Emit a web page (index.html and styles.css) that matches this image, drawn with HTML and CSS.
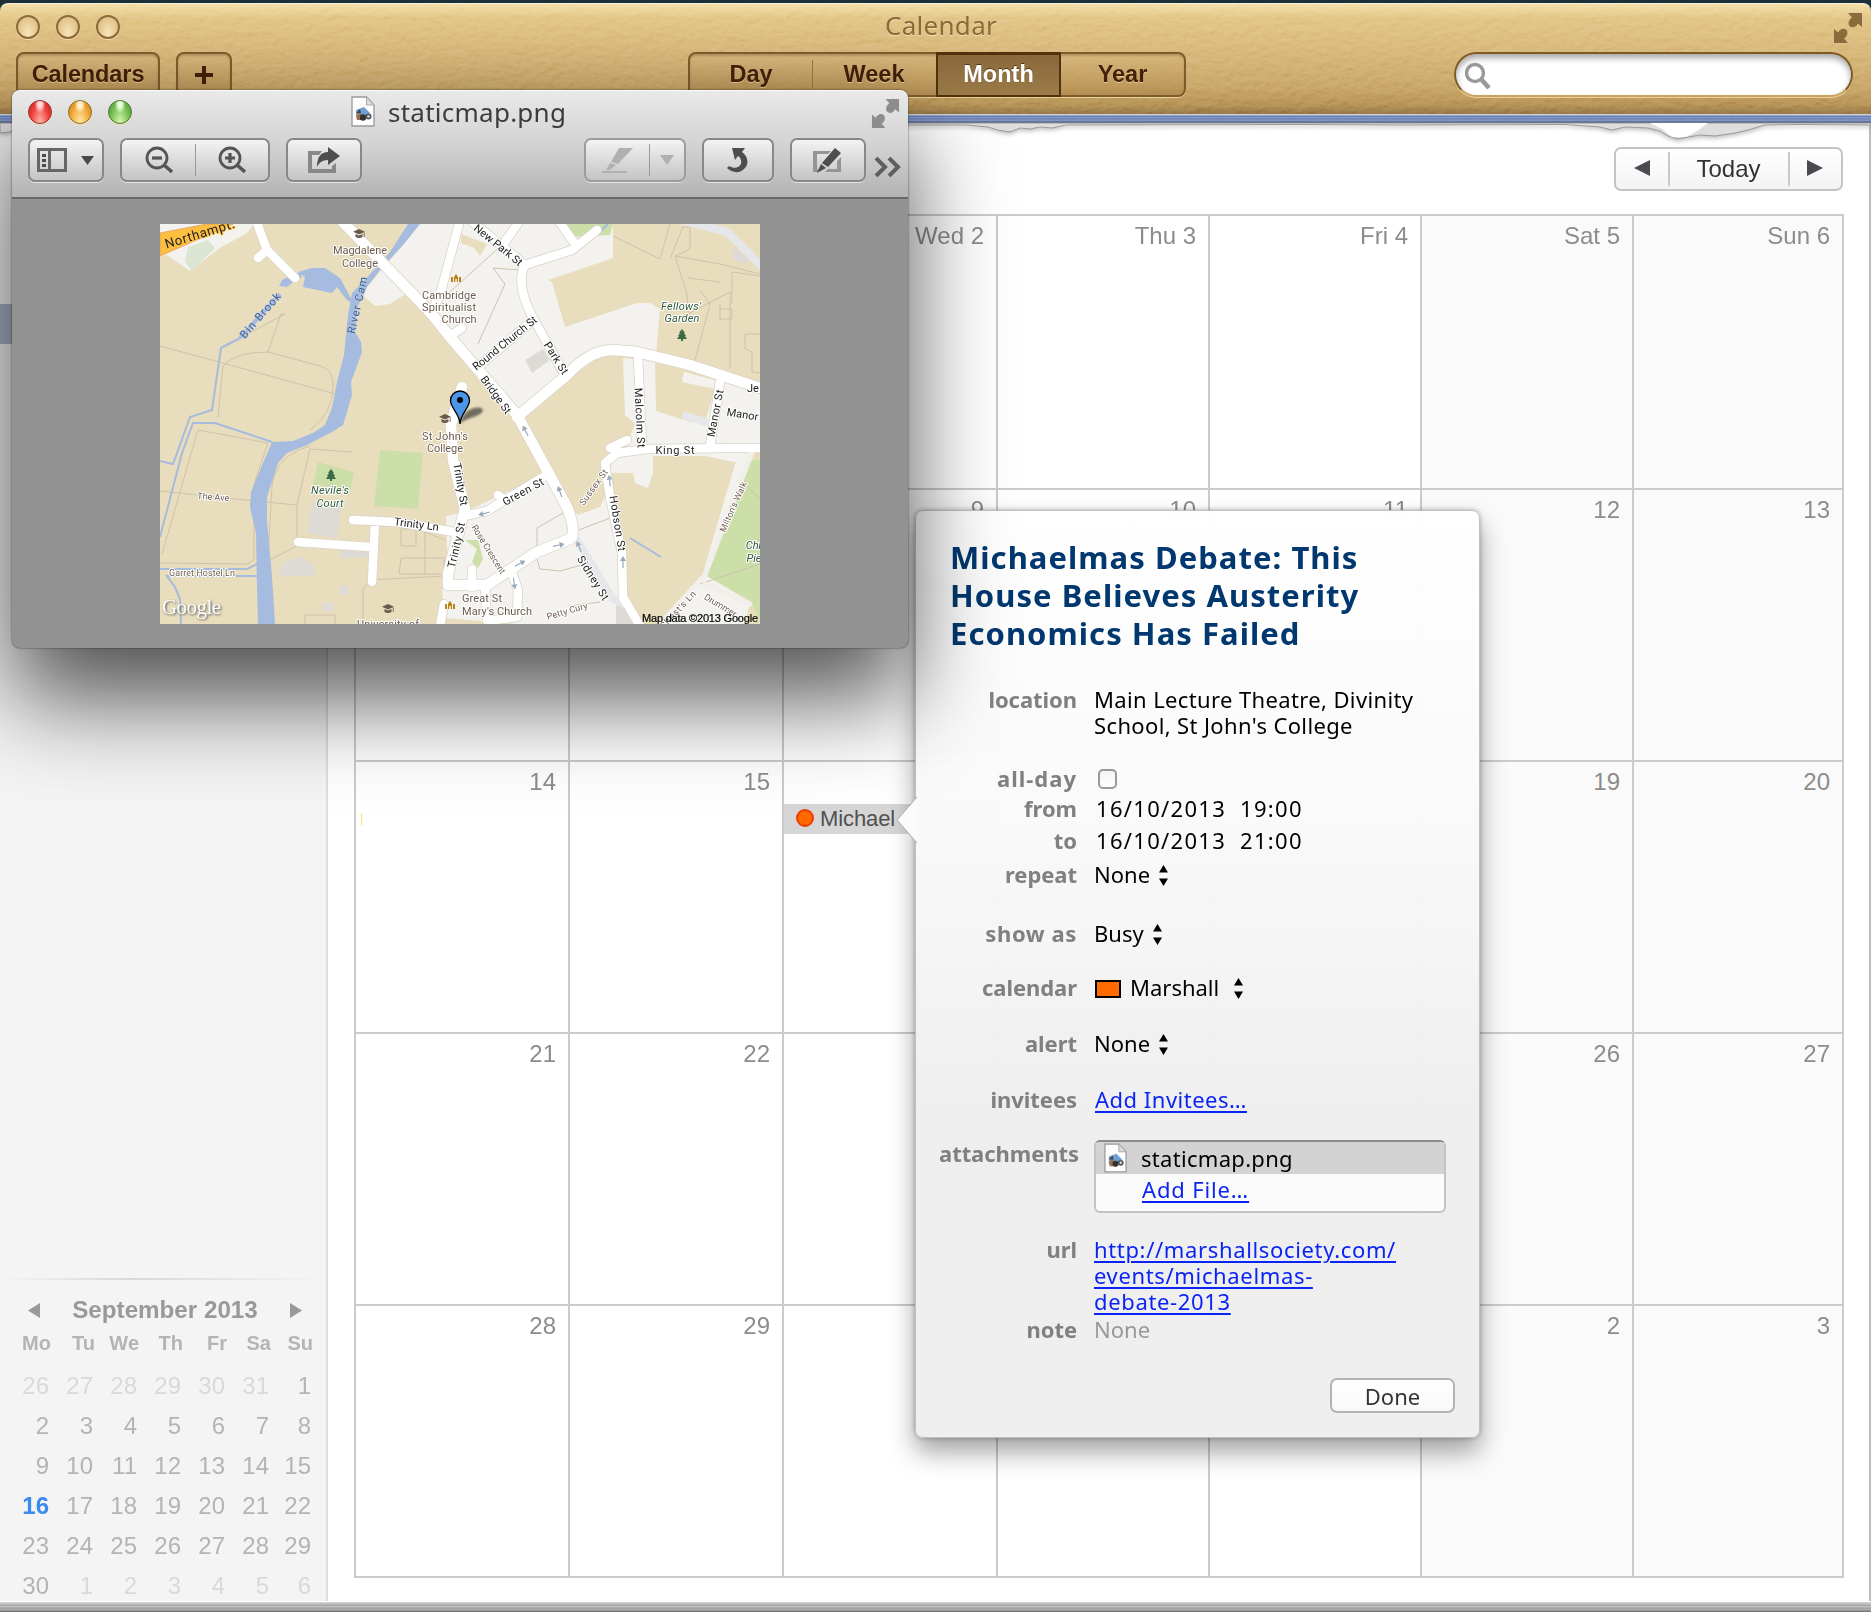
FILE: index.html
```html
<!DOCTYPE html>
<html lang="en">
<head>
<meta charset="utf-8">
<title>Calendar</title>
<link rel="stylesheet" href="styles.css">
</head>
<body>
<svg class="defs" width="0" height="0" aria-hidden="true">
  <defs>
    <symbol id="fullscreen" viewBox="0 0 28 30"><path d="M14 0H28V14L24 10.500C22 14.500 18 15.500 15.500 13C13.500 10.500 15 6.500 18 4.500ZM0 16L4 19.500C6 15.500 10 14.500 12.500 17C14.500 19.500 13 23.500 10 25.500L14 30H0Z"/></symbol>
    <symbol id="doc" viewBox="0 0 24 31"><path d="M1 1H15.500L23 9V30H1Z" fill="#fdfdfd" stroke="#999" stroke-width="1.300"/><path d="M15.500 1V9H23Z" fill="#ddd" stroke="#aaa"/><path d="M5 14L13 11L19 17L12 23L5 21Z" fill="#6f9fd8"/><path d="M5 20L9 16L13 24H6Z" fill="#9b7050"/><path d="M5 17L9 13L10 17Z" fill="#444"/><circle cx="12" cy="21.500" r="3.200" fill="#333"/><circle cx="17.500" cy="20.500" r="3" fill="#555"/><circle cx="17.500" cy="20.500" r="1.300" fill="#cde"/></symbol>
    <symbol id="updown" viewBox="0 0 9 21"><path d="M4.500 0L9 7.500H0ZM4.500 21L0 13.500H9Z"/></symbol>
    <symbol id="cap" viewBox="0 0 12 10"><path d="M6 0L12 2.800L6 5.500L0 2.800ZM2.500 5L6 6.600L9.500 5V8Q6 10 2.500 8ZM10.800 3.500H11.600V8H10.800Z" fill="#6b5b4d"/></symbol>
    <symbol id="tree" viewBox="0 0 10 12"><path d="M5 0L8 4H7L9 7H8L10 10H6V12H4V10H0L2 7H1L3 4H2Z" fill="#3d6b45"/></symbol>
    <symbol id="church" viewBox="0 0 10 8"><path d="M0 3H2V8H0ZM3 8V3L5 0L7 3V8H5.800V5H4.300V8ZM8 3H10V8H8Z" fill="#b98417"/></symbol>
    <symbol id="oneway" viewBox="0 0 6 12"><path d="M3 0L6 5H3.600V12H2.400V5H0Z" fill="#9aabb8"/></symbol>
  </defs>
</svg>

<div class="calendar">
  <header class="leather">
    <svg class="grain" width="1871" height="110" aria-hidden="true">
      <filter id="hide" x="0" y="0" width="100%" height="100%"><feTurbulence type="fractalNoise" baseFrequency="0.11 0.16" numOctaves="3" seed="8"/><feDiffuseLighting surfaceScale="1.700" lighting-color="#ddd"><feDistantLight azimuth="250" elevation="42"/></feDiffuseLighting></filter>
      <rect width="1871" height="110" filter="url(#hide)"/>
    </svg>
    <div class="titlebar">
      <div class="lights faded"><i></i><i></i><i></i></div>
      <h1>Calendar</h1>
      <svg class="full brown" width="28" height="30"><use href="#fullscreen"/></svg>
    </div>
    <div class="tools">
      <button class="lbtn calendars">Calendars</button>
      <button class="lbtn plus"><svg width="20" height="20"><path d="M10 1V19M1 10H19" stroke="#43210a" stroke-width="4"/></svg></button>
      <div class="views"><span>Day</span><span class="split">Week</span><span class="on">Month</span><span>Year</span></div>
      <div class="search"><svg width="26" height="28" fill="none" stroke="#999"><circle cx="10" cy="11" r="8.500" stroke-width="3.400"/><path d="M16 17L24 26" stroke-width="4.600"/></svg></div>
    </div>
  </header>
  <div class="stitch"></div>
  <div class="body">
    <svg class="torn" width="1871" height="20" aria-hidden="true">
      <path d="M0 0H1871V2L1800 1.500L1765 2L1748 7L1735 10L1715 13L1700 12L1688 14L1678 16L1668 13L1660 8L1648 5L1625 4L1612 7L1600 4L1565 1.500L1400 2L1300 1.500L1066 2L1052 5L1040 4L1030 6L1020 5L1010 9L998 7L988 4L966 2L600 2L20 2L10 9L0 10Z"/>
      <path class="white" d="M1650 0L1662 6L1672 14L1686 14L1697 8L1708 0Z"/>
    </svg>
    <aside>
      <div class="selected-calendar"></div>
      <div class="mini">
        <div class="mini-head"><svg width="12" height="15"><path d="M12 0V15L0 7.500Z"/></svg><b>September 2013</b><svg width="12" height="15"><path d="M0 0V15L12 7.500Z"/></svg></div>
        <div class="mini-grid names"><b>Mo</b><b>Tu</b><b>We</b><b>Th</b><b>Fr</b><b>Sa</b><b>Su</b></div>
        <div class="mini-grid days">
          <i>26</i><i>27</i><i>28</i><i>29</i><i>30</i><i>31</i><span>1</span>
          <span>2</span><span>3</span><span>4</span><span>5</span><span>6</span><span>7</span><span>8</span>
          <span>9</span><span>10</span><span>11</span><span>12</span><span>13</span><span>14</span><span>15</span>
          <b>16</b><span>17</span><span>18</span><span>19</span><span>20</span><span>21</span><span>22</span>
          <span>23</span><span>24</span><span>25</span><span>26</span><span>27</span><span>28</span><span>29</span>
          <span>30</span><i>1</i><i>2</i><i>3</i><i>4</i><i>5</i><i>6</i>
        </div>
      </div>
    </aside>
    <main>
      <div class="nav"><span class="arrow"><svg width="16" height="16"><path d="M16 0V16L0 8Z"/></svg></span><span class="today">Today</span><span class="arrow"><svg width="16" height="16"><path d="M0 0V16L16 8Z"/></svg></span></div>
      <div class="month">
        <div></div><div></div><div>Wed 2</div><div>Thu 3</div><div>Fri 4</div><div class="we">Sat 5</div><div class="we">Sun 6</div>
        <div></div><div></div><div>9</div><div>10</div><div>11</div><div class="we">12</div><div class="we">13</div>
        <div>14<span class="tick"></span></div><div>15</div><div><span class="event"><i></i>Michael</span></div><div></div><div></div><div class="we">19</div><div class="we">20</div>
        <div>21</div><div>22</div><div></div><div></div><div></div><div class="we">26</div><div class="we">27</div>
        <div>28</div><div>29</div><div></div><div></div><div></div><div class="we">2</div><div class="we">3</div>
      </div>
    </main>
  </div>
  <div class="pages"></div>
</div>

<section class="popover">
  <svg class="beak" width="21" height="46"><path d="M21 0L1 23L21 46" fill="#fbfbfb" stroke="#aaa"/></svg>
  <h2>Michaelmas Debate: This<br>House Believes Austerity<br>Economics Has Failed</h2>
  <dl>
    <dt>location</dt><dd class="loc">Main Lecture Theatre, Divinity<br>School, St John's College</dd>
    <dt class="allday">all-day</dt><dd><span class="check"></span></dd>
    <dt>from</dt><dd class="date">16/10/2013&nbsp; 19:00</dd>
    <dt>to</dt><dd class="date">16/10/2013&nbsp; 21:00</dd>
    <dt>repeat</dt><dd>None<svg class="ud" width="9" height="21"><use href="#updown"/></svg></dd>
    <dt class="showas">show as</dt><dd>Busy<svg class="ud" width="9" height="21"><use href="#updown"/></svg></dd>
    <dt>calendar</dt><dd><span class="swatch"></span>Marshall<svg class="ud wide" width="9" height="21"><use href="#updown"/></svg></dd>
    <dt>alert</dt><dd>None<svg class="ud" width="9" height="21"><use href="#updown"/></svg></dd>
    <dt>invitees</dt><dd><a class="inv">Add Invitees…</a></dd>
    <dt>attachments</dt><dd><div class="files"><div class="file"><svg width="23" height="30"><use href="#doc"/></svg>staticmap.png</div><a>Add File…</a></div></dd>
    <dt>url</dt><dd><a class="url">http://marshallsociety.com/<br>events/michaelmas-<br>debate-2013</a></dd>
    <dt>note</dt><dd class="none">None</dd>
  </dl>
  <button class="done">Done</button>
</section>

<section class="preview">
  <div class="chrome">
    <div class="ptitle">
      <div class="lights"><i class="r"></i><i class="y"></i><i class="g"></i></div>
      <div class="pname"><svg width="24" height="31"><use href="#doc"/></svg><span>staticmap.png</span></div>
      <svg class="full gray" width="29" height="29"><use href="#fullscreen"/></svg>
    </div>
    <div class="ptools">
      <div class="pb b1"><svg width="58" height="26"><path fill-rule="evenodd" d="M0 1H30V25H0ZM3 4V22H11V4ZM14 4V22H27V4Z" fill="#666"/><path d="M5 7H9V10H5ZM5 12H9V15H5ZM5 17H9V20H5ZM44 9H57L50.500 18Z" fill="#4a4a4a"/></svg></div>
      <div class="pb b2"><span><svg width="28" height="28" fill="none" stroke="#555"><circle cx="12" cy="12" r="10" stroke-width="2.800"/><path d="M7 12H17" stroke-width="3.200"/><path d="M19 19L27 26" stroke-width="3.600"/></svg></span><span><svg width="28" height="28" fill="none" stroke="#555"><circle cx="12" cy="12" r="10" stroke-width="2.800"/><path d="M7 12H17M12 7V17" stroke-width="3.200"/><path d="M19 19L27 26" stroke-width="3.600"/></svg></span></div>
      <div class="pb b3"><svg width="32" height="28"><path d="M14 5H0V27H28V17L24 20V23H4V9H11Z" fill="#888"/><path d="M20 1L32 10L20 19V14C14 14 11 17 9 21C9 11 13 6 20 6Z" fill="#4e4e4e"/></svg></div>
      <div class="pb b4"><span><svg width="34" height="28"><path d="M18 2H32L17 18L10 16ZM9 17L15 19L9 24L5 24ZM2 25H26V27H0Z"/></svg></span><span><svg width="14" height="10"><path d="M0 0H14L7 10Z"/></svg></span></div>
      <div class="pb b5"><svg width="24" height="28"><path d="M6 2H19L16 6C22 10 23 18 19 22C14 28 6 27 1 22L3 20C8 23 13 22 15 18C16 14 14 11 12 10L9 14Z" fill="#4e4e4e"/></svg></div>
      <div class="pb b6"><svg width="30" height="28"><path d="M0 5H18L15 8H4V23H7L5 26H0ZM28 11V26H12L15 23H24V15Z" fill="#959595"/><path d="M22 2L28 7L15 21L9 17ZM8 18L13 22L4 27Z" fill="#4e4e4e"/></svg></div>
      <svg class="more" width="28" height="20" fill="none" stroke="#5e5e5e" stroke-width="4"><path d="M2 1L11 10L2 19M15 1L24 10L15 19"/></svg>
    </div>
  </div>
  <div class="stage">
    <svg class="map" width="600" height="400" viewBox="0 0 600 400">
      <rect width="600" height="400" fill="#e8ddbd"/>
      <g fill="#f3f2ee">
        <path d="M0 0H94L87 9L60 24L30 47L7 31L0 32Z"/>
        <path d="M260 0H453V34L388 56L392 58L405 103L477 79L490 79L500 85L496 130L455 128L430 132L357 192L290 112L270 90L247 69L230 80L215 82L204 72L207 63L243 21Z"/>
        <path d="M463 134L495 137L496 187L530 198L545 198L555 165L522 158L524 148L600 168V228L585 226L583 240L545 232H493V249L488 264L475 259L473 249H452L440 240L465 225L475 200L465 191Z"/>
        <path d="M282 366L288 355L286 292L305 288L383 251L413 286L418 291L440 283L445 272L452 268L462 330L467 375L480 400H357L320 397L285 394Z"/>
        <path d="M592 228L580 256L545 351L590 378L585 400H505L541 356L575 240L583 230Z"/>
      </g>
      <path d="M28 23L48 16L55 24L32 47L25 38Z" fill="#dbe5d3"/>
      <path d="M301 10L327 20L320 32L314 24L301 19Z" fill="#e8ddbd"/>
      <g fill="#cddfa8">
        <path d="M158 238L194 248L190 268L153 260ZM220 226L263 229L258 285L214 282ZM407 0H453L450 11L412 13ZM592 236H600V396L590 376L545 351L560 311L580 256ZM305 316L318 316L323 335L318 344L312 338L317 325Z"/>
      </g>
      <g fill="#dedad5">
        <path d="M152 278L182 279L177 314L147 309ZM117 353L123 339L140 333L153 341L155 351ZM365 136L383 125L390 136L372 149ZM180 326L208 328V334H180ZM180 362H189V371H180ZM162 379H173V387H162ZM573 22L590 36L585 40L572 35ZM456 380L470 384L478 400H456Z"/>
      </g>
      <g fill="none" stroke="#cfc2ae" stroke-width="1">
        <path d="M0 122L70 141L190 174M80 114L125 90L121 90L108 128M63 142Q75 128 108 128L160 142Q175 146 173 165Q172 190 150 206M63 142L58 194M38 206L108 219L94 260L94 335L88 340L0 339M38 206L2 330M0 267L95 277L137 281M137 315L137 281L150 225L192 228M107 353L112 262Q115 232 150 222M97 342L137 322M203 400V365L210 356L284 352M241 305H256V322H241ZM241 334H284V350H239ZM265 308V350M285 316L265 308M145 400V391H175V400M318 120L345 60L333 44L360 46M290 68L345 18M453 12L500 35L510 0M510 35L523 3H530V25L515 32L527 70L528 90L570 68V145M515 32L560 40L600 50M528 54L560 58M540 66L550 80L534 140M572 80V48L600 52M560 85H572V95H560V80M585 110H600M585 110V125L592 128V148L600 149M377 304L410 285M377 304V322M419 306L450 294M377 335L380 345L400 347L425 340M540 360L600 340M580 256L600 275M440 378L410 382"/>
      </g>
      <g fill="#a5bbdf">
        <path d="M248 0L230 28L203 58L192 69L188 91L184 131L177 158L172 184L165 201L153 209L133 217L112 218L103 239L91 268L90 283L96 309L97 363L98 400H115L112 353L107 296V273L118 239L127 229L147 221L172 208L183 201L192 171L191 158L202 128L201 118L195 108L197 84L207 63L220 46L243 21L260 0Z"/>
        <path d="M138 48L152 44L165 44L180 54L188 69L194 80L187 76L177 63L172 69L143 63L145 53ZM119 62L122 56L140 48L142 53L133 58L127 63Z"/>
      </g>
      <g fill="none" stroke="#a5bbdf" stroke-width="2">
        <path d="M80 114L61 124L52 186L30 193L13 240L0 237M112 218L55 199H33L22 229L0 313M0 345H87L97 340M7 352H97M6 351L15 363L20 375L21 400M440 8L448 0M470 314L501 333"/>
        <path d="M120 70L80 114" stroke-width="4"/>
      </g>
      <g fill="none" stroke-linecap="round" stroke-linejoin="round">
        <g stroke="#d9d3c6">
          <path d="M180 -5L270 88L290 113L357 191L387 246L407 283Q417 308 410 315L377 328L327 361H288V350L298 310L305 285L293 236L291 200L302 163M600 164L530 141L477 128L453 126Q430 126 407 151L357 193" stroke-width="12"/>
          <path d="M96 -4L107 26L135 54M107 26L98 34M300 -4L280 71L270 90M310 -4L365 41L412 26L437 6M365 41Q355 60 373 94L405 151M360 -4L345 18M398 -4L415 20M373 96L317 144M478 132L482 222M560 158L550 222M600 224H567L487 225L457 229L445 239L450 273L462 329L463 373L480 402M450 224L467 216M304 292L327 287L345 276L385 252M345 276L338 271M193 296L237 298L300 309M215 299L212 358M138 318L210 323M290 112L302 104M352 349L358 366L357 393L327 397L325 363M312 363V345M284 380L280 402" stroke-width="10"/>
        </g>
        <path d="M520 -4L567 8Q580 20 600 41M415 313L452 374L464 380M526 192L545 198" stroke="#e6e7ea" stroke-width="8"/>
        <path d="M592 228L545 351L500 400M545 360L590 380" stroke="#f1efe9" stroke-width="5"/>
        <g stroke="#fff">
          <path d="M180 -5L270 88L290 113L357 191L387 246L407 283Q417 308 410 315L377 328L327 361H288V350L298 310L305 285L293 236L291 200L302 163M600 164L530 141L477 128L453 126Q430 126 407 151L357 193" stroke-width="10.500"/>
          <path d="M96 -4L107 26L135 54M107 26L98 34M300 -4L280 71L270 90M310 -4L365 41L412 26L437 6M365 41Q355 60 373 94L405 151M360 -4L345 18M398 -4L415 20M373 96L317 144M478 132L482 222M560 158L550 222M600 224H567L487 225L457 229L445 239L450 273L462 329L463 373L480 402M450 224L467 216M304 292L327 287L345 276L385 252M345 276L338 271M193 296L237 298L300 309M215 299L212 358M138 318L210 323M290 112L302 104M352 349L358 366L357 393L327 397L325 363M312 363V345M284 380L280 402" stroke-width="8.500"/>
        </g>
      </g>
      <path d="M0 9L47 0H73L0 32Z" fill="#fdbf3f" stroke="#e8a56a"/>
      <use href="#oneway" width="6" height="12" transform="translate(360 203) rotate(-28)"/>
      <use href="#oneway" width="6" height="12" transform="translate(395 263) rotate(-20)"/>
      <use href="#oneway" width="6" height="12" transform="translate(446 251) rotate(-6)"/>
      <use href="#oneway" width="6" height="12" transform="translate(460 332)"/>
      <use href="#oneway" width="6" height="12" transform="translate(414 318) rotate(-22)"/>
      <use href="#oneway" width="6" height="12" transform="translate(404 317) rotate(78)"/>
      <use href="#oneway" width="6" height="12" transform="translate(364 334) rotate(62)"/>
      <use href="#oneway" width="6" height="12" transform="translate(319 294) rotate(-105)"/>
      <use href="#oneway" width="6" height="12" transform="translate(358 365) rotate(172)"/>
      <g class="lb">
        <text class="trunk" transform="translate(41 14) rotate(-17)" textLength="72">Northampt.</text>
        <text transform="translate(336 24) rotate(39)" textLength="59">New Park St</text>
        <text transform="translate(347 122) rotate(-39)" textLength="79">Round Church St</text>
        <text transform="translate(393 136) rotate(58)" textLength="36">Park St</text>
        <text transform="translate(333 173) rotate(54)" textLength="44">Bridge St</text>
        <text transform="translate(476 194) rotate(87)" textLength="60">Malcolm St</text>
        <text transform="translate(559 190) rotate(-79)" textLength="48">Manor St</text>
        <text transform="translate(582 194) rotate(9)">Manor</text>
        <text x="593" y="168">Je</text>
        <text x="515" y="230" textLength="39">King St</text>
        <text transform="translate(454 300) rotate(81)" textLength="56">Hobson St</text>
        <text transform="translate(365 271) rotate(-29)" textLength="45">Green St</text>
        <text transform="translate(297 261) rotate(80)" textLength="43">Trinity St</text>
        <text transform="translate(300 322) rotate(-77)" textLength="46">Trinity St</text>
        <text transform="translate(430 356) rotate(58)" textLength="50">Sidney St</text>
        <text transform="translate(256 304) rotate(7)" textLength="45">Trinity Ln</text>
      </g>
      <g class="lb poi">
        <text x="200" y="30" textLength="54">Magdalene</text><text x="200" y="43" textLength="36">College</text>
        <text x="289" y="75" textLength="54">Cambridge</text><text x="289" y="87" textLength="54">Spiritualist</text><text x="299" y="99" textLength="35">Church</text>
        <text x="285" y="216" textLength="46">St John's</text><text x="285" y="228" textLength="36">College</text>
        <text x="322" y="378" textLength="40">Great St</text><text x="337" y="391" textLength="70">Mary's Church</text>
        <text x="228" y="404" textLength="62">University of</text>
        <g class="minor">
          <text transform="translate(436 265) rotate(-54)" textLength="42">Sussex St</text>
          <text transform="translate(326 327) rotate(58)" textLength="56">Rose Crescent</text>
          <text transform="translate(408 390) rotate(-16)" textLength="42">Petty Cury</text>
          <text transform="translate(576 284) rotate(-66)" textLength="54">Milton's Walk</text>
          <text transform="translate(520 388) rotate(-47)" textLength="48">Christ's Ln</text>
          <text transform="translate(559 384) rotate(31)" textLength="36">Drummer</text>
          <text transform="translate(53 276) rotate(4)" textLength="32">The Ave</text>
          <text x="42" y="352" textLength="66">Garret Hostel Ln</text>
        </g>
      </g>
      <g class="lb water">
        <text transform="translate(103 94) rotate(-49)" textLength="56">Bin Brook</text>
        <text transform="translate(201 82) rotate(-77)" textLength="58">River Cam</text>
      </g>
      <g class="lb park">
        <text x="521" y="86" textLength="40">Fellows'</text><text x="522" y="98" textLength="35">Garden</text>
        <text x="170" y="270" textLength="38">Nevile's</text><text x="170" y="283" textLength="27">Court</text>
        <text x="594" y="325">Chr</text><text x="594" y="338">Pie</text>
      </g>
      <use href="#cap" x="193" y="5" width="12" height="10"/><use href="#cap" x="279" y="190" width="12" height="10"/><use href="#cap" x="222" y="380" width="12" height="10"/>
      <use href="#tree" x="517" y="105" width="10" height="12"/><use href="#tree" x="166" y="245" width="10" height="12"/>
      <use href="#church" x="291" y="50" width="10" height="8"/><use href="#church" x="285" y="377" width="10" height="8"/>
      <path class="pin-shadow" d="M300 200C302 192 306 186 314 184C322 182 326 186 320 190C314 194 306 194 300 200Z"/>
      <path d="M300 200C300 190 290.500 184 290.500 176.500A9.500 9.500 0 0 1 309.500 176.500C309.500 184 300 190 300 200Z" fill="#4a96e8" stroke="#000" stroke-width="1.300"/><circle cx="300" cy="176" r="3"/>
      <text class="glogo" x="2" y="390" textLength="59">Google</text>
      <text class="credit" x="598" y="398" textLength="116">Map data ©2013 Google</text>
    </svg>
  </div>
</section>
</body>
</html>
```

FILE: styles.css
```css
* { box-sizing: border-box; }
body {
  margin: 0; width: 1871px; height: 1612px; overflow: hidden; position: relative;
  background: #1d3037; font-family: "Liberation Sans", Arial, sans-serif; color: #8c8c8c;
}
.defs { position: absolute; }
button { font: inherit; padding: 0; border: 0; }
.calendar { height: 1612px; padding-top: 3px; display: flex; flex-direction: column; }

/* leather header */
.leather {
  height: 111px; position: relative; border-top: 1px solid #eef0e6; border-radius: 8px 8px 0 0; overflow: hidden;
  background: linear-gradient(#f3dc9f 0, #dfc07e 14px, #d6b473 40%, #c4a05f 75%, #b08a4b 92%, #8c6c38);
}
.grain { position: absolute; inset: 0; mix-blend-mode: soft-light; opacity: .5; }
.titlebar { position: relative; height: 48px; display: flex; justify-content: space-between; padding: 0 9px 0 16px; }
.titlebar h1 {
  margin: 0 70px 0 -16px; font: 400 26px/43px "Noto Sans", sans-serif; letter-spacing: .3px; color: #8a6a38; text-shadow: 0 1px #f3dfae;
}
.titlebar .lights { margin-top: 11px; width: 118px; }
.lights { display: flex; gap: 16px; }
.lights i { width: 24px; height: 24px; border-radius: 50%; border: 2px solid #8d6c3a; background: radial-gradient(ellipse at 50% 90%, #ffeec8, #dcb878 70%); box-shadow: 0 1px #f5dfa8; }
.faded i { background: radial-gradient(ellipse at 50% 85%, #f9e6bd, #e3c48a 70%); }
.full { flex: none; }
.brown { margin-top: 9px; fill: #8a6b3b; }
.tools { position: relative; height: 45px; display: flex; padding: 0 18px 0 16px; }
.lbtn, .views {
  height: 45px; border: 2px solid #7d5c2c; border-radius: 8px; background: linear-gradient(rgba(216, 184, 126, .7), rgba(170, 130, 70, .6));
  box-shadow: 0 1px #ecd194, inset 0 2px 2px rgba(80, 50, 10, .25);
  font-size: 23.5px; font-weight: 700; color: #43210a; text-shadow: 0 1px #e6c98c;
}
.calendars { width: 144px; letter-spacing: -.1px; }
.plus { width: 56px; margin-left: 16px; display: grid; place-items: center; }
.views { width: 498px; margin-left: 456px; display: grid; grid-template-columns: 122px 124px 125px 123px; line-height: 41px; text-align: center; }
.views .split { background: linear-gradient(#9a7742, #9a7742) 0 6px / 1px 29px no-repeat; }
.views .on { margin: -2px 0; color: #fff; text-shadow: 0 -1px #4d3310; background: linear-gradient(#8a683a, #9c7c4a); border: 2px solid #51320c; border-top-width: 3px; line-height: 38px; }
.search { margin-left: auto; width: 399px; height: 45px; border: 2px solid #7d5a22; border-bottom-color: #c8a463; border-radius: 23px; background: #fff; box-shadow: inset 0 4px 6px rgba(0, 0, 0, .35), 0 1px #ecd194; padding: 8px 9px; }
.stitch { height: 9px; background: linear-gradient(#cdd3e0 0 1px, #5f75ad 2px, #8ba3d2 4px, #5b70a8 5px, #93a5cd 6px, #566a9c 8px, #8e8e90); }

/* content */
.body { height: 1478px; display: flex; position: relative; background: #fff; }
.torn { position: absolute; left: 0; top: 0; fill: #dedede; stroke: #9b9b9b; stroke-width: 1; filter: drop-shadow(0 2px 2px rgba(0, 0, 0, .25)); }
.torn .white { fill: #fff; stroke: none; }
aside { width: 328px; border-right: 2px solid #dedede; background: #f4f4f4; display: flex; flex-direction: column; justify-content: space-between; }
.selected-calendar { margin-top: 181px; height: 40px; background: #aab2c8; }
.mini { height: 323px; border-top: 2px solid; border-image: linear-gradient(90deg, #f4f4f4, #d8d8d8 40%, #f4f4f4) 1; }
.mini-head { display: flex; align-items: center; justify-content: space-between; margin: 14px 24px 0 28px; height: 32px; font-size: 24.2px; color: #999; }
.mini-head svg { fill: #999; }
.mini-grid { display: grid; grid-template-columns: 44px 44px 44px 44px 44px 44px 42px; text-align: right; margin-left: 5px; }
.names { font-size: 20px; line-height: 24px; margin: 5px 0 21px 7px; color: #b4b4b4; }
.days { font-size: 24px; line-height: 40px; color: #b4b4b4; margin-top: -10px; }
.days i { font-style: normal; color: #d9d9d9; }
.days b { color: #3b8af0; }
main { width: 1543px; border-right: 2px solid #bbb; padding: 24px 26px 0 26px; }
.nav { margin-left: auto; width: 229px; height: 44px; border: 2px solid #c4c4c4; border-radius: 7px; background: linear-gradient(#fff, #f3f3f3); display: flex; align-items: center; }
.arrow { flex: 1; display: grid; place-items: center; margin-top: -2px; }
.arrow svg { fill: #4a4b50; }
.today { width: 122px; border: solid #c8c8c8; border-width: 0 2px; line-height: 34px; height: 34px; text-align: center; font-size: 24px; color: #333; }
.month {
  margin-top: 23px; width: 1490px; display: grid; grid-template-columns: 214px 214px 214px 212px 212px 212px 210px;
  grid-template-rows: 274px 272px 272px 272px 272px; border: solid #cbcbcb; border-width: 2px 0 0 2px;
}
.month > div { position: relative; border: solid #cbcbcb; border-width: 0 2px 2px 0; padding: 6px 12px; text-align: right; font-size: 24px; line-height: 27px; }
.month .we { background: #fafafa; }
.event { position: absolute; left: 0; top: 42px; width: 214px; height: 30px; background: #d6d6d6; display: flex; align-items: center; padding: 0 0 2px 12px; font-size: 22px; letter-spacing: -.1px; color: #505050; }
.event i { width: 18px; height: 18px; border-radius: 50%; background: #ff6a00; border: 2px solid #f03c00; margin-right: 6px; }
.tick { position: absolute; left: 5px; top: 51px; width: 1px; height: 13px; background: #ffe27a; }
.pages { flex: 1; background: linear-gradient(#fff 0 1px, #a9a9a9 2px, #d8d8d8 3px, #999 4px, #cfcfcf 6px, #8a8a8a 7px, #bbb 8px, #6b6b6b); }

/* event inspector */
.popover {
  position: absolute; left: 915px; top: 510px; width: 565px; height: 928px; border-radius: 8px; border: 1px solid #c0c0c0;
  background: linear-gradient(rgba(255, 255, 255, .985), rgba(249, 249, 249, .975) 35%, rgba(238, 238, 238, .97) 65%, rgba(238, 238, 238, .97));
  box-shadow: 0 14px 26px rgba(0, 0, 0, .36), 0 0 5px rgba(0, 0, 0, .3);
  font: 22px/26px "Noto Sans", sans-serif; color: #000; padding: 27px 24px 0 23px;
}
.beak { position: absolute; left: -20px; top: 286px; }
.popover h2 { margin: 0 0 0 11px; font-size: 31px; line-height: 38px; letter-spacing: 1.05px; color: #00386f; }
.popover dl { margin: 34px 0 0; display: grid; grid-template-columns: 138px 355px; column-gap: 17px; grid-template-rows: 79px 30px 32px 34px 59px 54px 55.5px 56px 54px 96.5px 80px 62px; }
dt { font-weight: 700; text-align: right; color: #808080; white-space: nowrap; letter-spacing: -.05px; }
dd { margin: 0; white-space: nowrap; }
.allday { letter-spacing: 1px; }
.showas { letter-spacing: .6px; }
.loc { letter-spacing: .37px; }
.date { padding-left: 2px; letter-spacing: 1.3px; }
.check { display: block; width: 19px; height: 20px; margin: 4px 0 0 4px; border: 2px solid #999; border-radius: 5px; background: linear-gradient(#f4f4f4, #fff); }
.ud { margin-left: 9px; vertical-align: -3px; }
.ud.wide { margin-left: 15px; }
.swatch { display: inline-block; width: 26px; height: 18px; margin: 0 9px 0 1px; border: 2px solid #000; background: #ff6a00; vertical-align: -2px; }
.popover a { color: #0a24f5; text-decoration: underline; text-decoration-thickness: 2px; text-underline-offset: 3px; }
.inv { margin-left: 1px; letter-spacing: .5px; }
.url { letter-spacing: .65px; }
.files { width: 352px; height: 73px; border: 2px solid #c4c4c4; border-top-color: #8a8a8a; border-radius: 6px; background: #fbfbfb; overflow: hidden; }
.file { height: 32px; background: #d3d3d3; display: flex; align-items: center; gap: 14px; padding-left: 8px; margin-bottom: 2px; letter-spacing: .3px; }
.files a { margin-left: 46px; letter-spacing: .85px; }
.none { color: #999; }
.done { display: block; margin-left: auto; width: 125px; height: 35px; border: 2px solid #b3b3b3; border-radius: 7px; background: linear-gradient(#fff, #f8f8f8); color: #333; line-height: 30px; }

/* image viewer window */
.preview {
  position: absolute; left: 12px; top: 90px; width: 896px; height: 558px; border-radius: 8px; background: #929292;
  box-shadow: 0 50px 95px rgba(0, 0, 0, .68), 0 0 2px rgba(0, 0, 0, .7);
}
.chrome { height: 109px; border-radius: 8px 8px 0 0; border-top: 1px solid #fafafa; border-bottom: 2px solid #686868; background: linear-gradient(#e9e9e9, #d3d3d3 50%, #b3b3b3); }
.ptitle { height: 47px; display: flex; padding: 0 8px 0 16px; }
.ptitle .lights { width: 118px; margin-top: 9px; }
.ptitle i { border-width: 1.5px; }
.lights .r { border-color: #99302c; background: radial-gradient(ellipse at 50% 15%, #ffd9d4 0 12%, transparent 35%), radial-gradient(ellipse at 50% 95%, #ffb4ac, #ee3c38 60%, #b52725); }
.lights .y { border-color: #9a6a24; background: radial-gradient(ellipse at 50% 15%, #fff1cf 0 12%, transparent 35%), radial-gradient(ellipse at 50% 95%, #ffe9a4, #f0a632 60%, #b87620); }
.lights .g { border-color: #4b7b35; background: radial-gradient(ellipse at 50% 15%, #e9ffdc 0 12%, transparent 35%), radial-gradient(ellipse at 50% 95%, #d6f7ae, #72bd52 60%, #4b8b36); }
.pname { display: flex; gap: 13px; margin: 5px 0 0 205px; font: 26px/32px "Noto Sans", sans-serif; letter-spacing: .25px; color: #3c3c3c; }
.gray { fill: #8d8d8d; margin: 8px 0 0 auto; }
.ptools { display: flex; align-items: center; padding: 0 7px 0 16px; height: 44px; }
.pb { flex: none; height: 44px; border: 2px solid #888; border-radius: 7px; background: linear-gradient(#f3f3f3, #c4c4c4); box-shadow: 0 1px rgba(255, 255, 255, .6); display: flex; align-items: center; justify-content: center; }
.pb svg { display: block; }
.pb span { flex: 1; align-self: stretch; display: grid; place-items: center; }
.pb span + span { background: linear-gradient(#999, #999) 0 50% / 1px 32px no-repeat; }
.b1 { width: 76px; }
.b2 { width: 150px; margin-left: 16px; }
.b3 { width: 76px; margin-left: 16px; }
.b4 { width: 102px; margin-left: 222px; border-color: #9c9c9c; }
.b4 svg { fill: #b0b0b0; }
.b4 span:first-child { flex: 0 0 63px; }
.b5 { width: 72px; margin-left: 16px; }
.b6 { width: 76px; margin-left: 16px; }
.more { margin: 14px 0 0 8px; }
.stage { height: 449px; padding: 25px 0 0 148px; }
.map { display: block; }
.lb { font: 11px Roboto, sans-serif; fill: #222; text-anchor: middle; paint-order: stroke; stroke: #fff; stroke-width: 2px; stroke-linejoin: round; }
.trunk { font-size: 13px; stroke: #fdbf3f; }
.minor { font-size: 9px; }
.lb.poi { fill: #6b5b4d; }
.lb.water { fill: #3f5f92; stroke: #bccbe6; stroke-width: 1px; }
.lb.park { fill: #2f5a3a; font-style: italic; }
.pin-shadow { fill: #222; opacity: .6; filter: blur(1px); }
.glogo { font: 21px "Liberation Serif", serif; fill: #fff; filter: drop-shadow(1px 1px 1px #555); }
.credit { font: 11px "Liberation Sans", sans-serif; fill: #000; stroke: #000; stroke-width: .2px; text-anchor: end; }
```
